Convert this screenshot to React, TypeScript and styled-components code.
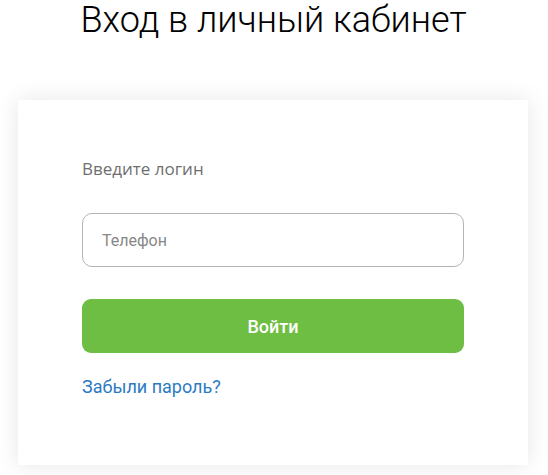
import React from "react";
import styled, { createGlobalStyle } from "styled-components";

const GlobalStyle = createGlobalStyle`
  html, body {
    margin: 0;
    padding: 0;
    background: #fff;
  }
  * {
    box-sizing: border-box;
  }
`;

const App = () => {
  return (
    <Base>
      <GlobalStyle />
      <Title>Вход в личный кабинет</Title>
      <Card>
        <Label>Введите логин</Label>
        <Input placeholder="Телефон" />
        <Button>Войти</Button>
        <Link href="#">Забыли пароль?</Link>
      </Card>
    </Base>
  );
};

const Base = styled.div`
  width: 548px;
  height: 475px;
  display: flex;
  flex-direction: column;
  align-items: center;
  overflow: hidden;
`;

const Title = styled.h1`
  margin: 0 0 0 -1px;
  font-family: Roboto, sans-serif;
  font-weight: 300;
  font-size: 36px;
  line-height: 40px;
  color: #000;
`;

const Card = styled.div`
  margin: 60px 2px 0 0;
  width: 510px;
  height: 365px;
  background: #fff;
  box-shadow: 0 0 22px rgba(0, 0, 0, 0.1);
  padding: 57px 64px 0;
  display: flex;
  flex-direction: column;
`;

const Label = styled.div`
  font-family: "Open Sans", sans-serif;
  font-size: 17px;
  line-height: 24px;
  color: #6f6f6f;
`;

const Input = styled.input`
  margin-top: 32px;
  width: 100%;
  height: 54px;
  border: 1px solid #b3b3b3;
  border-radius: 10px;
  padding: 0 19px;
  font-family: Roboto, sans-serif;
  font-size: 16px;
  color: #333;
  outline: none;
  &::placeholder {
    color: #888;
  }
`;

const Button = styled.button`
  margin-top: 32px;
  width: 100%;
  height: 54px;
  border: none;
  border-radius: 9px;
  background: #6fbe44;
  color: #fff;
  font-family: Roboto, sans-serif;
  font-weight: 500;
  font-size: 18px;
  cursor: pointer;
`;

const Link = styled.a`
  margin-top: 22px;
  font-family: Roboto, sans-serif;
  font-size: 18px;
  line-height: 24px;
  color: #2b7bc2;
  text-decoration: none;
  align-self: flex-start;
`;

export default App;
